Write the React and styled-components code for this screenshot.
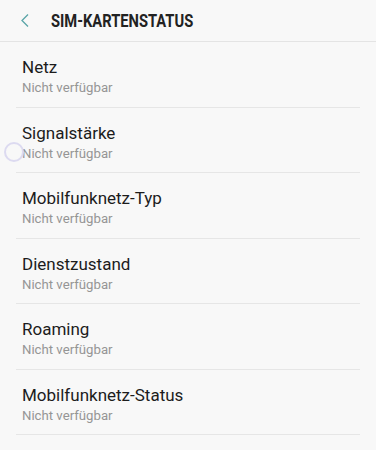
import styled, { createGlobalStyle } from "styled-components";

const GlobalStyle = createGlobalStyle`
  html, body {
    margin: 0;
    padding: 0;
    background: #f8f8f8;
  }
  body {
    font-family: Roboto, "Noto Sans", sans-serif;
  }
`;

const Screen = styled.div`
  width: 376px;
  height: 450px;
  overflow: hidden;
  background: #f8f8f8;
  position: relative;
`;

const Header = styled.div`
  height: 42px;
  display: flex;
  align-items: center;
  border-bottom: 1px solid #e4e4e4;
  box-sizing: border-box;
`;

const BackButton = styled.div`
  width: 51px;
  height: 42px;
  display: flex;
  align-items: center;
  padding-left: 20px;
  box-sizing: border-box;
`;

const Title = styled.div`
  font-family: Roboto, sans-serif;
  font-weight: 700;
  font-size: 17.5px;
  color: #222;
  transform: scaleX(0.84);
  transform-origin: left center;
  white-space: nowrap;
`;

const List = styled.div`
  display: flex;
  flex-direction: column;
`;

const Row = styled.div`
  height: 65.5px;
  padding: 14px 0 0 22px;
  box-sizing: border-box;
  position: relative;
  margin: 0 16px 0 0;
  &::after {
    content: "";
    position: absolute;
    left: 16px;
    right: 0;
    bottom: 0;
    height: 1px;
    background: #e6e6e6;
  }
`;

const Label = styled.div`
  font-size: 17px;
  line-height: 22px;
  color: #1c1c1c;
`;

const Sub = styled.div`
  font-size: 13.2px;
  line-height: 18px;
  margin-top: 1px;
  color: #959595;
`;

const Ripple = styled.div`
  position: absolute;
  left: 4px;
  top: 142px;
  width: 20px;
  height: 20px;
  border-radius: 50%;
  border: 2px solid #dcdaf0;
  box-sizing: border-box;
`;

const items = [
  "Netz",
  "Signalstärke",
  "Mobilfunknetz-Typ",
  "Dienstzustand",
  "Roaming",
  "Mobilfunknetz-Status",
];

export default function App() {
  return (
    <Screen>
      <GlobalStyle />
      <Header>
        <BackButton>
          <svg width="10" height="15" viewBox="0 0 10 15">
            <path d="M8 1.5 L2 7.5 L8 13.5" fill="none" stroke="#5aa5a8" strokeWidth="1.3" />
          </svg>
        </BackButton>
        <Title>SIM-KARTENSTATUS</Title>
      </Header>
      <List>
        {items.map((t) => (
          <Row key={t}>
            <Label>{t}</Label>
            <Sub>Nicht verfügbar</Sub>
          </Row>
        ))}
      </List>
      <Ripple />
    </Screen>
  );
}
